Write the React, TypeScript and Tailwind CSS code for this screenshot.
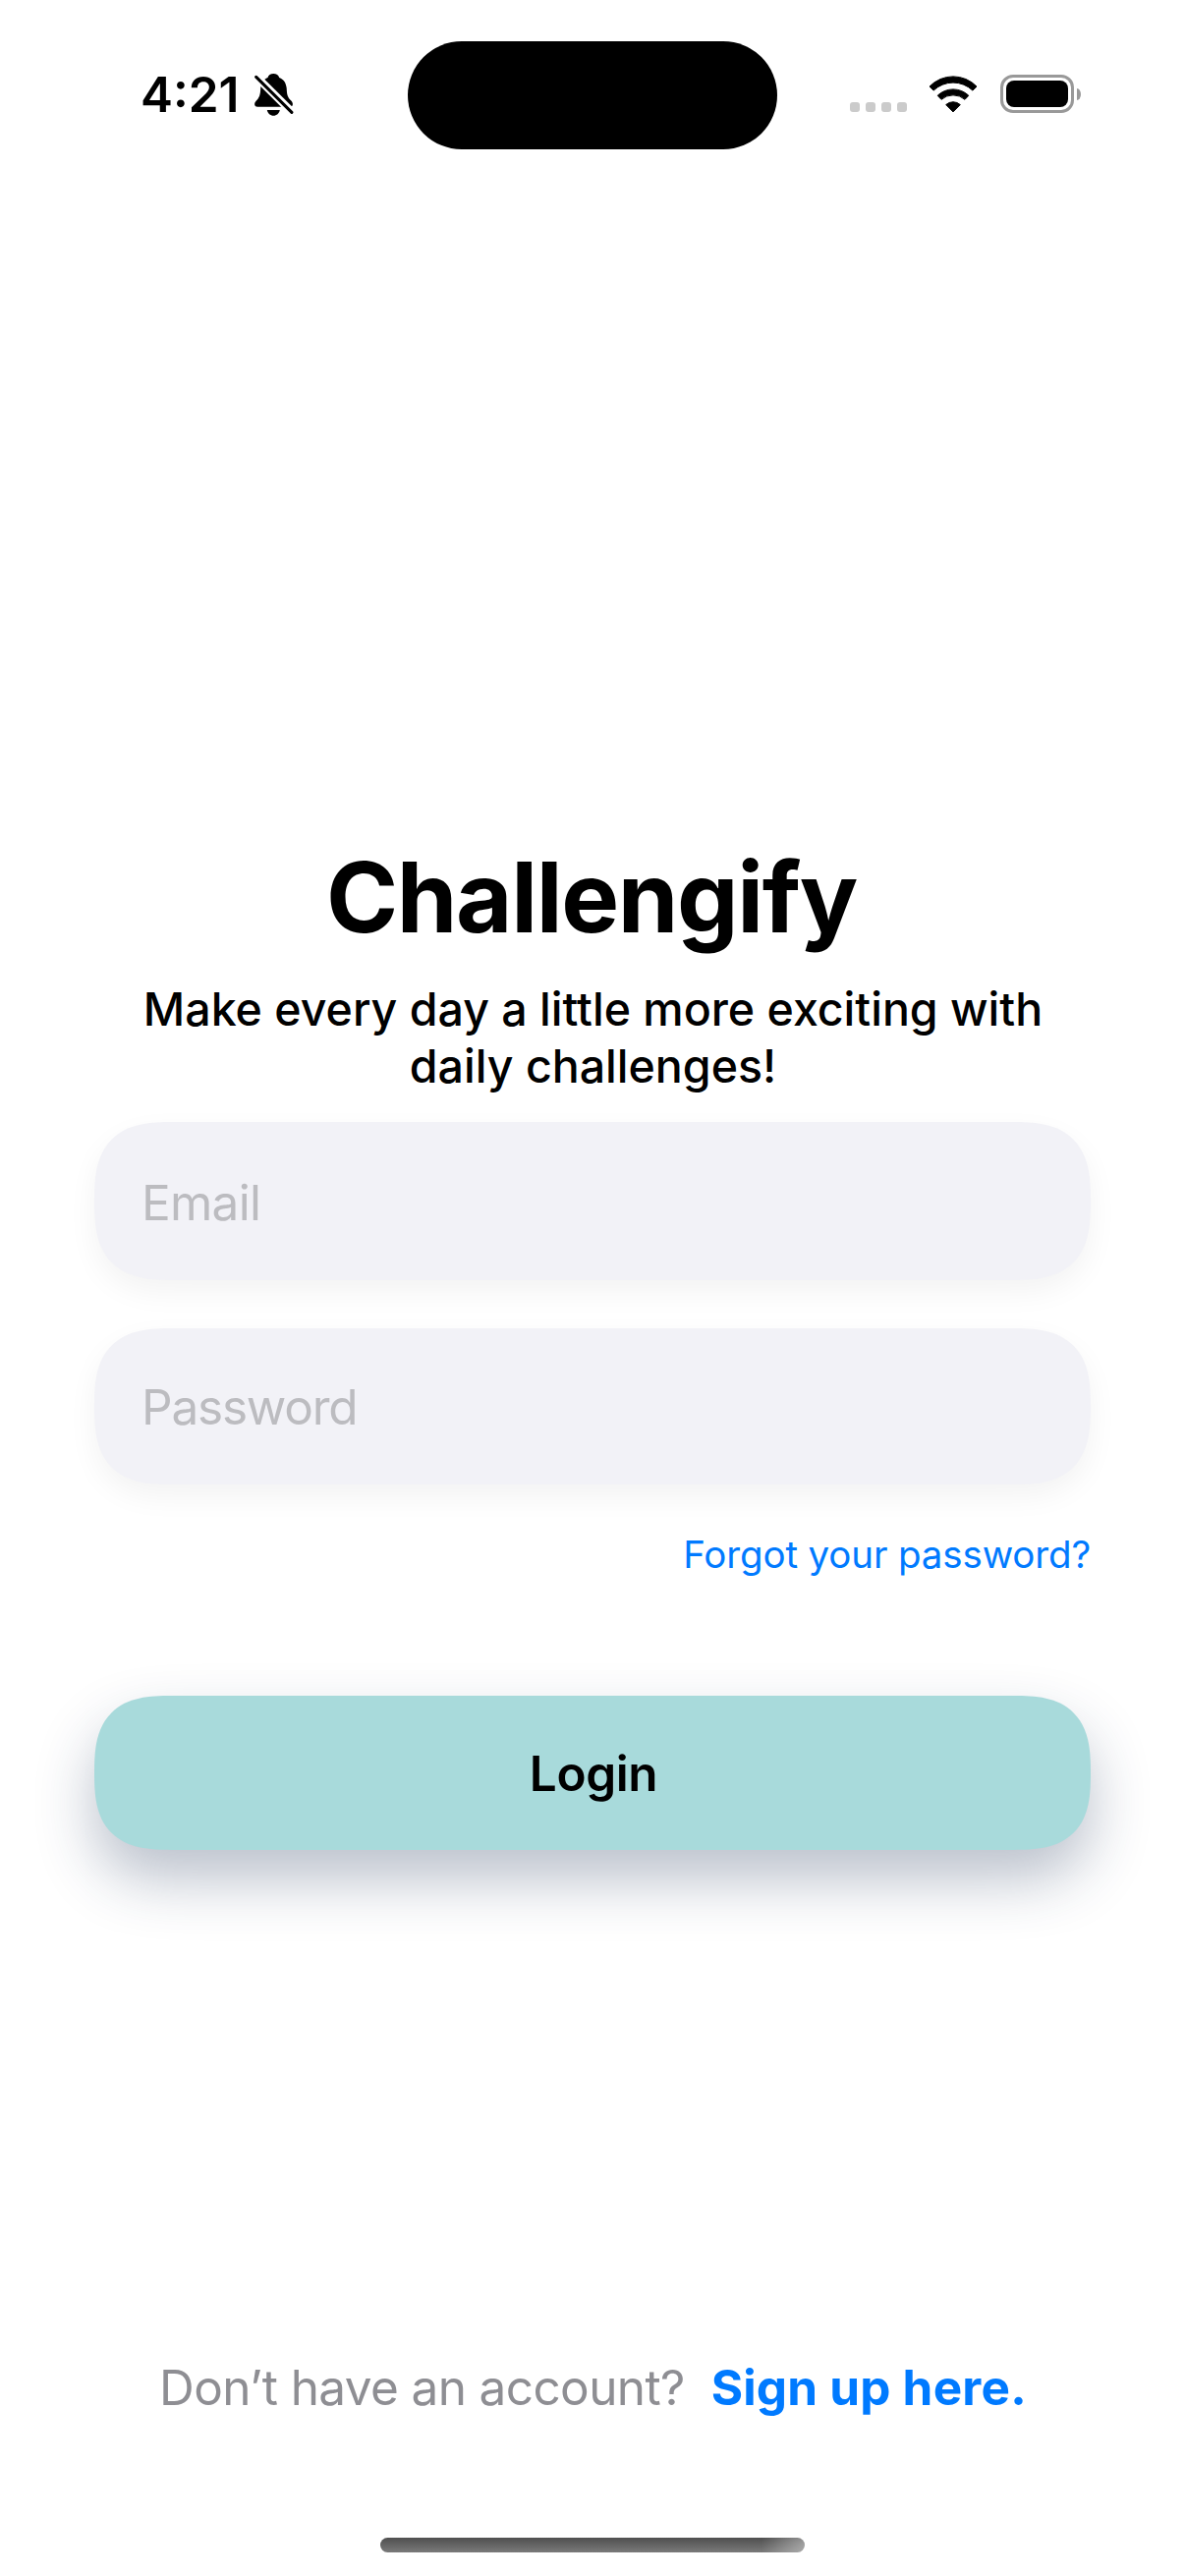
function BellSlash() {
  return (
    <svg viewBox="0 0 40 43" className="mb-[1px] ml-[15px] h-[43px] w-[40px] shrink-0" aria-hidden="true">
      <path
        d="M19.3 0c3 0 5.2 1.5 5.9 4 4.6 1.6 7 5.800 7.500 10.700.3 6.300.8 9.300 4.600 12.800 2.400 2.300 2.200 6.300-1.100 6.300H3.200C-.2 33.800-.8 30.300 1.400 28 5 24.500 6 21.500 6.200 14.700 6.600 9.800 9 5.600 13.500 4c.7-2.500 2.800-4 5.800-4Z"
        fill="#000"
      />
      <path d="M12.800 36.900h13c-.6 3.400-3.300 5.800-6.500 5.800s-5.900-2.400-6.500-5.800Z" fill="#000" />
      <path d="M0 1.200 40 41" stroke="#fff" strokeWidth="8" />
      <path d="M1.700 3.300 37.900 39.300" stroke="#000" strokeWidth="3.100" strokeLinecap="round" />
    </svg>
  );
}

function Wifi() {
  return (
    <svg viewBox="0 0 50 38" className="mb-[2px] ml-[22px] h-[38px] w-[50px] shrink-0" aria-hidden="true">
      <g fill="#000" stroke="#000" strokeWidth="1" strokeLinejoin="round">
        <path d="M1 11.100A33.300 33.300 0 0 1 49 11.100L44.900 15.100A28.700 28.700 0 0 0 5.100 15.100Z" />
        <path d="M9.200 20.300A22.700 22.700 0 0 1 40.800 20.300L37 24.300A18.400 18.400 0 0 0 13 24.300Z" />
        <path d="M17.700 29.600A10.800 10.800 0 0 1 32.300 29.600L25 36.900Z" />
      </g>
    </svg>
  );
}

function Battery() {
  return (
    <div className="mb-[3px] ml-[23px] flex shrink-0 items-center gap-[3px]">
      <div className="flex h-[39px] w-[75px] rounded-[13px] border-3 border-[#999] p-[3px]">
        <div className="flex-1 rounded-[8px] bg-black" />
      </div>
      <div className="h-[12px] w-[4px] rounded-r-[4px_6px] bg-[#999]" />
    </div>
  );
}

function StatusBar() {
  return (
    <header className="mt-[42px] flex h-[110px] shrink-0 items-center pl-[143px]">
      <time className="mb-[2px] w-[101px] shrink-0 text-[49.5px] leading-[60px] font-semibold">4:21</time>
      <BellSlash />
      <div className="ml-[116px] h-[110px] w-[376px] shrink-0 rounded-full bg-black" />
      <div className="mt-[24px] ml-[74px] flex shrink-0 gap-[6px]">
        <i className="size-[10px] rounded-[3px] bg-[#cbcbcb]" />
        <i className="size-[10px] rounded-[3px] bg-[#cbcbcb]" />
        <i className="size-[10px] rounded-[3px] bg-[#cbcbcb]" />
        <i className="size-[10px] rounded-[3px] bg-[#cbcbcb]" />
      </div>
      <Wifi />
      <Battery />
    </header>
  );
}

const fieldClass =
  "block w-full rounded-[80px] bg-[#f2f2f7] px-12 text-[49.5px] text-black shadow-[0_12px_30px_rgba(0,0,0,0.05)] outline-none [corner-shape:superellipse(1.47)] placeholder:text-[#bcbcc0] placeholder:opacity-100";

export default function App() {
  return (
    <div className="flex h-[2622px] w-[1206px] flex-col overflow-hidden bg-white font-['Inter',sans-serif] text-black">
      <StatusBar />

      <main className="mt-[701px] flex flex-col px-24">
        <h1 className="pr-[2px] text-center text-[99px] leading-[120px] font-bold tracking-[-1.35px]">Challengify</h1>
        <p className="mt-[25px] pl-px text-center text-[46.5px] leading-[58px] font-medium">
          Make every day a little more exciting with
          <br />
          daily challenges!
        </p>
        <form className="mt-[28px] flex flex-col" onSubmit={(e) => e.preventDefault()}>
          <input
            type="email"
            placeholder="Email"
            aria-label="Email"
            className={`${fieldClass} h-[161px] pt-[3px] tracking-[-0.75px]`}
          />
          <input
            type="password"
            placeholder="Password"
            aria-label="Password"
            className={`${fieldClass} mt-[49px] h-[159px] pt-px tracking-[-1.2px]`}
          />
          <a href="#" className="mt-[47px] self-end text-[38.5px] leading-[48px] tracking-[-0.13px] text-[#007aff]">
            Forgot your password?
          </a>
          <button
            type="submit"
            className="mt-[120px] h-[157px] w-full rounded-[80px] bg-[#a8dadb] pt-[2px] pl-[2px] text-[49.5px] font-semibold tracking-[-0.4px] shadow-[0_30px_60px_rgba(30,50,85,0.3)] [corner-shape:superellipse(1.47)]"
          >
            Login
          </button>
        </form>
      </main>

      <footer className="mt-auto flex flex-col items-center">
        <p className="flex gap-[27px] pl-px text-[49.5px] leading-[60px] whitespace-nowrap">
          <span className="tracking-[-0.63px] text-[#8e8e93]">Don’t have an account?</span>
          <a href="#" className="font-bold tracking-[0.2px] text-[#007aff]">
            Sign up here.
          </a>
        </p>
        <div className="mt-[123px] mb-[24px] h-[15px] w-[432px] rounded-full bg-[radial-gradient(circle_at_right,rgba(255,255,255,0.4),transparent_44px),linear-gradient(#4f4f4f,#7a7a7a)]" />
      </footer>
    </div>
  );
}
